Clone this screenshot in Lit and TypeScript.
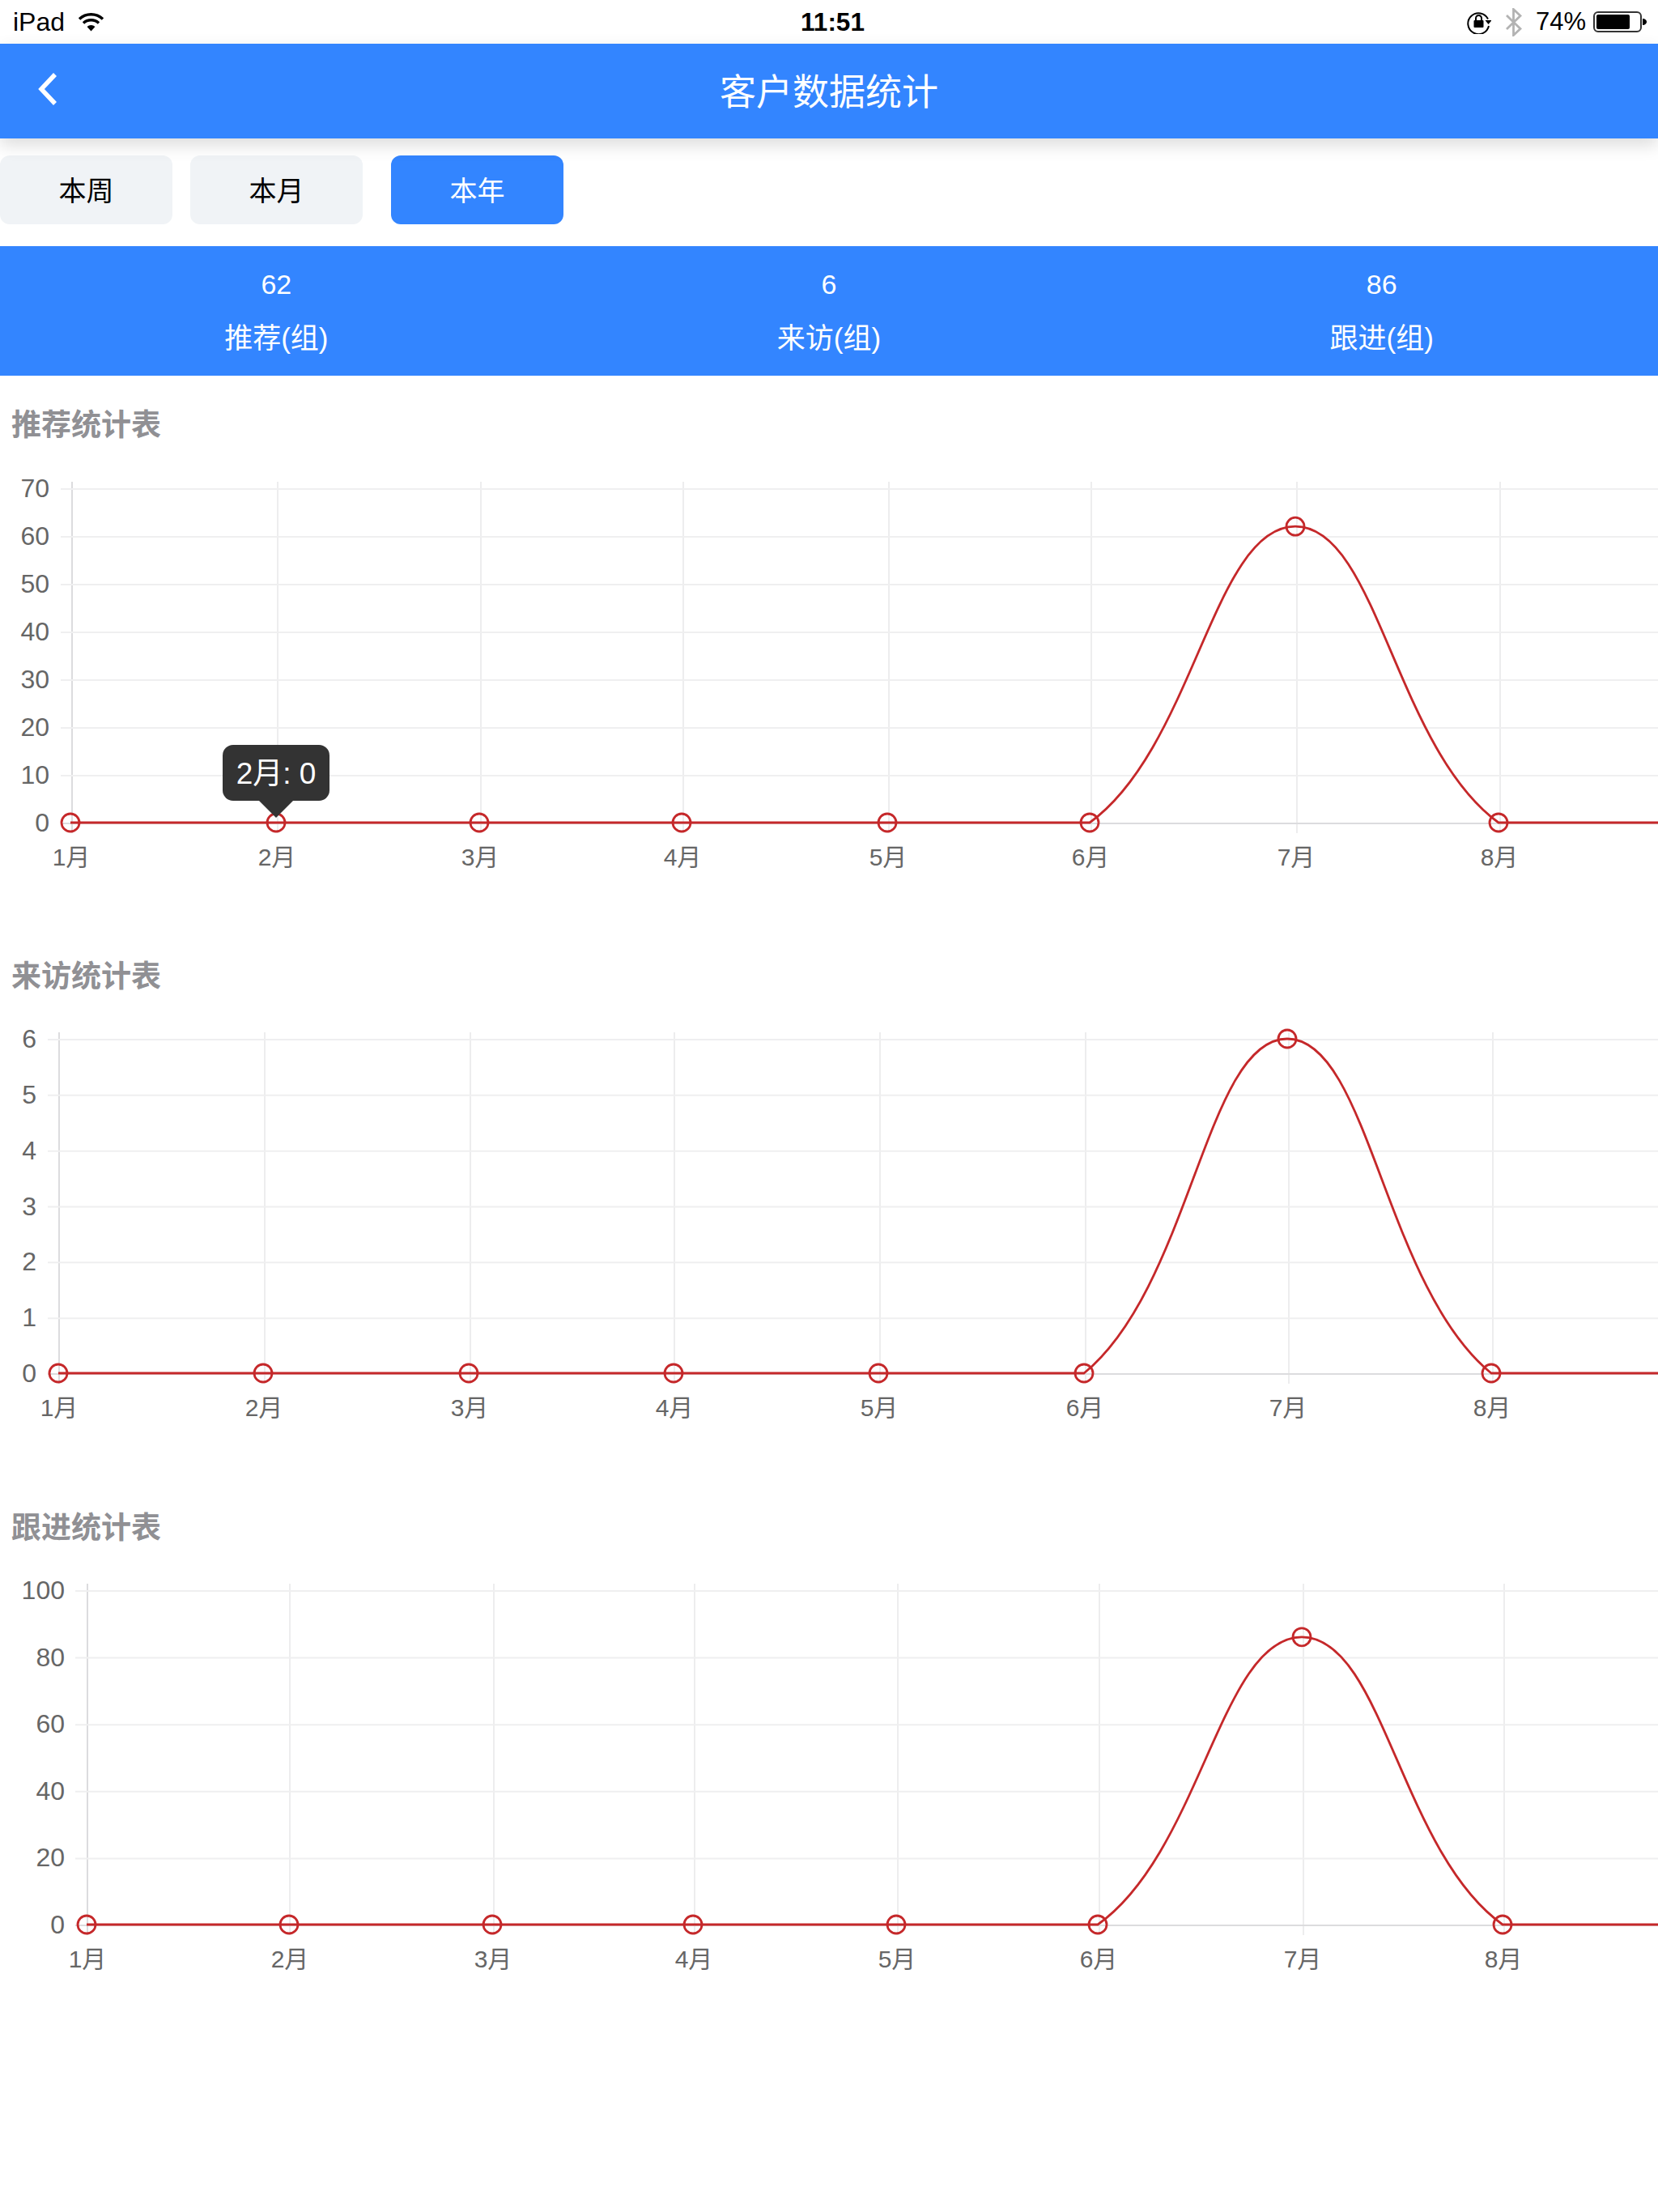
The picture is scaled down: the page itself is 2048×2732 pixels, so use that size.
import { LitElement, html, css, svg } from "lit";
import { customElement } from "lit/decorators.js";

interface Chart {
  title: string;
  max: number;
  step: number;
  value: number;
  xs: number[];
  grid: number[];
  axisX: number;
  labelX: number;
  top: number;
  zero: number;
  tip?: number;
}

const months = ["1月", "2月", "3月", "4月", "5月", "6月", "7月", "8月"];
const OFFSET = 84; // section y of the svg top

const charts: Chart[] = [
  {
    title: "推荐统计表", max: 70, step: 10, value: 62,
    xs: [87, 341, 592, 842, 1096, 1346, 1600, 1851],
    grid: [89, 343, 594, 844, 1098, 1348, 1602, 1853],
    axisX: 75, labelX: 61, top: 140, zero: 553, tip: 1,
  },
  {
    title: "来访统计表", max: 6, step: 1, value: 6,
    xs: [72, 325, 579, 832, 1085, 1339, 1590, 1842],
    grid: [73, 327, 581, 833, 1087, 1341, 1592, 1844],
    axisX: 59, labelX: 45, top: 139, zero: 552,
  },
  {
    title: "跟进统计表", max: 100, step: 20, value: 86,
    xs: [107, 357, 608, 856, 1107, 1356, 1608, 1856],
    grid: [108, 358, 610, 858, 1109, 1358, 1610, 1858],
    axisX: 93, labelX: 80, top: 139, zero: 552,
  },
];

function curve(c: Chart): string {
  const y0 = c.zero - OFFSET - 1;
  const scale = (c.zero - c.top) / c.max;
  const yp = y0 - c.value * scale;
  const [a, b, d] = [c.xs[5], c.xs[6], c.xs[7]];
  const t = 0.4;
  const prev = c.xs[4];
  const side = (x0: number, x1: number, xn: number) => {
    const d01 = Math.abs(x0 - xn);
    const d12 = Math.hypot(x1 - x0, yp - y0);
    const fb = d12 / (d01 + d12);
    return { x: x0 + t * fb * (x1 - xn), y: y0 + t * fb * (yp - y0) };
  };
  const c1 = side(a, b, prev);
  const c4 = side(d, b, d + (a - prev));
  const h = t * 0.5 * (d - a);
  return `M${c.xs[0]} ${y0} L${a} ${y0} C${c1.x} ${c1.y} ${b - h} ${yp} ${b} ${yp} C${b + h} ${yp} ${c4.x} ${c4.y} ${d} ${y0} L2048 ${y0}`;
}

function chartSvg(c: Chart) {
  const top = c.top - OFFSET;
  const zero = c.zero - OFFSET;
  const ticks: number[] = [];
  for (let v = 0; v <= c.max; v += c.step) ticks.push(v);
  const scale = (zero - top) / c.max;
  const y0 = zero - 1;
  const yp = y0 - c.value * scale;
  return svg`
    ${c.grid.map(
      (x, i) => svg`<line class=${i === 0 ? "axis" : "vgrid"} x1=${x} x2=${x} y1=${top - 9} y2=${zero + 12}></line>`
    )}
    ${ticks.map((v) => {
      const y = zero - v * scale;
      return svg`
        <line class=${v === 0 ? "axis" : "hgrid"} x1=${c.axisX} x2="2048" y1=${y} y2=${y}></line>
        <text class="ytick" x=${c.labelX} y=${y - 1.5} dy="0.36em">${v}</text>`;
    })}
    ${months.map(
      (m, i) => svg`<text class="xtick" x=${c.xs[i] + 1} y=${zero + 41} dy="0.36em">${m}</text>`
    )}
    <path class="line" d=${curve(c)}></path>
    ${c.xs.map(
      (x, i) => svg`<circle class="dot" cx=${x} cy=${i === 6 ? yp : y0} r="11"></circle>`
    )}
    ${c.tip !== undefined
      ? svg`
        <g class="tip">
          <rect x=${c.xs[c.tip] - 66} y=${y0 - 96} width="132" height="69" rx="13"></rect>
          <polygon points="${c.xs[c.tip] - 21},${y0 - 27} ${c.xs[c.tip] + 21},${y0 - 27} ${c.xs[c.tip]},${y0 - 6}"></polygon>
          <text class="tiptext" x=${c.xs[c.tip]} y=${y0 - 61} dy="0.36em">${months[c.tip]}: 0</text>
        </g>`
      : ""}
  `;
}

@customElement("app-root")
export class AppRoot extends LitElement {
  static styles = css`
    :host {
      display: block;
      width: 2048px;
      min-height: 2732px;
      background: #fff;
      font-family: "Liberation Sans", "Noto Sans CJK SC", sans-serif;
      color: #000;
    }
    .status {
      height: 54px;
      display: grid;
      grid-template-columns: 1fr auto 1fr;
      align-items: center;
      padding: 0 14px 0 16px;
      box-sizing: border-box;
      font-size: 32px;
    }
    .status-left {
      display: flex;
      align-items: center;
      gap: 16px;
    }
    .status-time {
      font-weight: 700;
      font-size: 31.5px;
      padding-left: 7px;
    }
    .status-right {
      display: flex;
      align-items: center;
      justify-content: flex-end;
    }
    .status-right svg { display: block; }
    .lock { margin-right: 17px; }
    .bt { margin-right: 17px; }
    .pct { margin-right: 9px; font-size: 31px; }
    .nav {
      height: 117px;
      background: #3385ff;
      display: flex;
      align-items: center;
      justify-content: center;
      position: relative;
      box-shadow: 0 8px 20px rgba(0, 0, 0, 0.14);
      color: #fff;
      font-size: 45px;
    }
    .nav-title {
      padding-bottom: 5px;
    }
    .back {
      position: absolute;
      left: 45px;
      top: 35px;
    }
    .tabs {
      display: flex;
      padding: 21px 0 27px;
    }
    .tab {
      width: 213px;
      height: 85px;
      border-radius: 12px;
      background: #f0f3f6;
      display: flex;
      align-items: center;
      justify-content: center;
      font-size: 34px;
      padding-bottom: 2px;
      box-sizing: border-box;
    }
    .tab.gap-s { margin-right: 22px; }
    .tab.gap-l { margin-right: 35px; }
    .tab.on {
      background: #3385ff;
      color: #fff;
    }
    .stats {
      height: 160px;
      box-sizing: border-box;
      background: #3385ff;
      color: #fff;
      display: grid;
      grid-template-columns: repeat(3, 1fr);
      padding-top: 24px;
      text-align: center;
    }
    .stat-value {
      font-size: 34px;
      line-height: 46px;
      margin-bottom: 21px;
    }
    .stat-label {
      font-size: 35px;
      line-height: 46px;
    }
    .section {
      height: 681px;
      padding-top: 41px;
      box-sizing: border-box;
    }
    .title {
      height: 43px;
      line-height: 42px;
      padding-left: 14px;
      font-size: 37px;
      font-weight: 700;
      color: #909094;
    }
    .chart {
      display: block;
      width: 2048px;
      height: 597px;
    }
    .hgrid { stroke: #efeff0; stroke-width: 2; }
    .vgrid { stroke: #e7e7e9; stroke-width: 1.5; }
    .axis { stroke: #dcdcde; stroke-width: 2; }
    .line { fill: none; stroke: #c5282a; stroke-width: 2.8; }
    .dot { fill: none; stroke: #c5282a; stroke-width: 2.8; }
    .ytick, .xtick {
      fill: #666;
      font-size: 32px;
    }
    .ytick { text-anchor: end; }
    .xtick { text-anchor: middle; font-size: 30px; }
    .tip rect, .tip polygon { fill: #333; }
    .tiptext {
      fill: #fff;
      font-size: 37px;
      text-anchor: middle;
    }
  `;

  render() {
    return html`
      <div class="status">
        <div class="status-left">
          <span>iPad</span>
          <svg width="33" height="24" viewBox="0 0 33 24">
            <path d="M2 8.5a21 21 0 0 1 29 0" fill="none" stroke="#000" stroke-width="3.4"></path>
            <path d="M7 13.5a14 14 0 0 1 19 0" fill="none" stroke="#000" stroke-width="3.4"></path>
            <path d="M11.5 18l5 5.5 5-5.5a7.5 7.5 0 0 0-10 0z" fill="#000"></path>
          </svg>
        </div>
        <div class="status-time">11:51</div>
        <div class="status-right">
          <svg class="lock" width="30" height="30" viewBox="0 0 30 30">
            <path d="M26 11.5A13 13 0 1 0 27 20" fill="none" stroke="#000" stroke-width="2"></path>
            <path d="M22.5 13h8l-4 5z" fill="#000"></path>
            <rect x="8.5" y="13" width="12" height="9" rx="1" fill="#000"></rect>
            <path d="M11 13v-2.5a3.5 3.5 0 0 1 7 0V13" fill="none" stroke="#000" stroke-width="2"></path>
          </svg>
          <svg class="bt" width="21" height="35" viewBox="0 0 21 35">
            <path d="M2 9l17 16.5-8.5 8V1.5l8.5 8L2 26" fill="none" stroke="#b3b3b3" stroke-width="2.8"></path>
          </svg>
          <span class="pct">74%</span>
          <svg width="66" height="26" viewBox="0 0 66 26">
            <rect x="1" y="1" width="58" height="24" rx="5" fill="none" stroke="#333" stroke-width="2"></rect>
            <rect x="4" y="4" width="41" height="18" rx="2" fill="#000"></rect>
            <path d="M61 9c3 0 5 2 5 4s-2 4-5 4z" fill="#000"></path>
          </svg>
        </div>
      </div>
      <div class="nav">
        <svg class="back" width="28" height="42" viewBox="0 0 28 42">
          <polyline points="23,3 6,21 23,39" fill="none" stroke="#fff" stroke-width="5.5"></polyline>
        </svg>
        <span class="nav-title">客户数据统计</span>
      </div>
      <div class="tabs">
        <div class="tab gap-s">本周</div>
        <div class="tab gap-l">本月</div>
        <div class="tab on">本年</div>
      </div>
      <div class="stats">
        ${[["62", "推荐(组)"], ["6", "来访(组)"], ["86", "跟进(组)"]].map(
          ([v, l]) => html`<div>
            <div class="stat-value">${v}</div>
            <div class="stat-label">${l}</div>
          </div>`
        )}
      </div>
      ${charts.map(
        (c) => html`<div class="section">
          <div class="title">${c.title}</div>
          <svg class="chart" viewBox="0 0 2048 597">${chartSvg(c)}</svg>
        </div>`
      )}
    `;
  }
}
